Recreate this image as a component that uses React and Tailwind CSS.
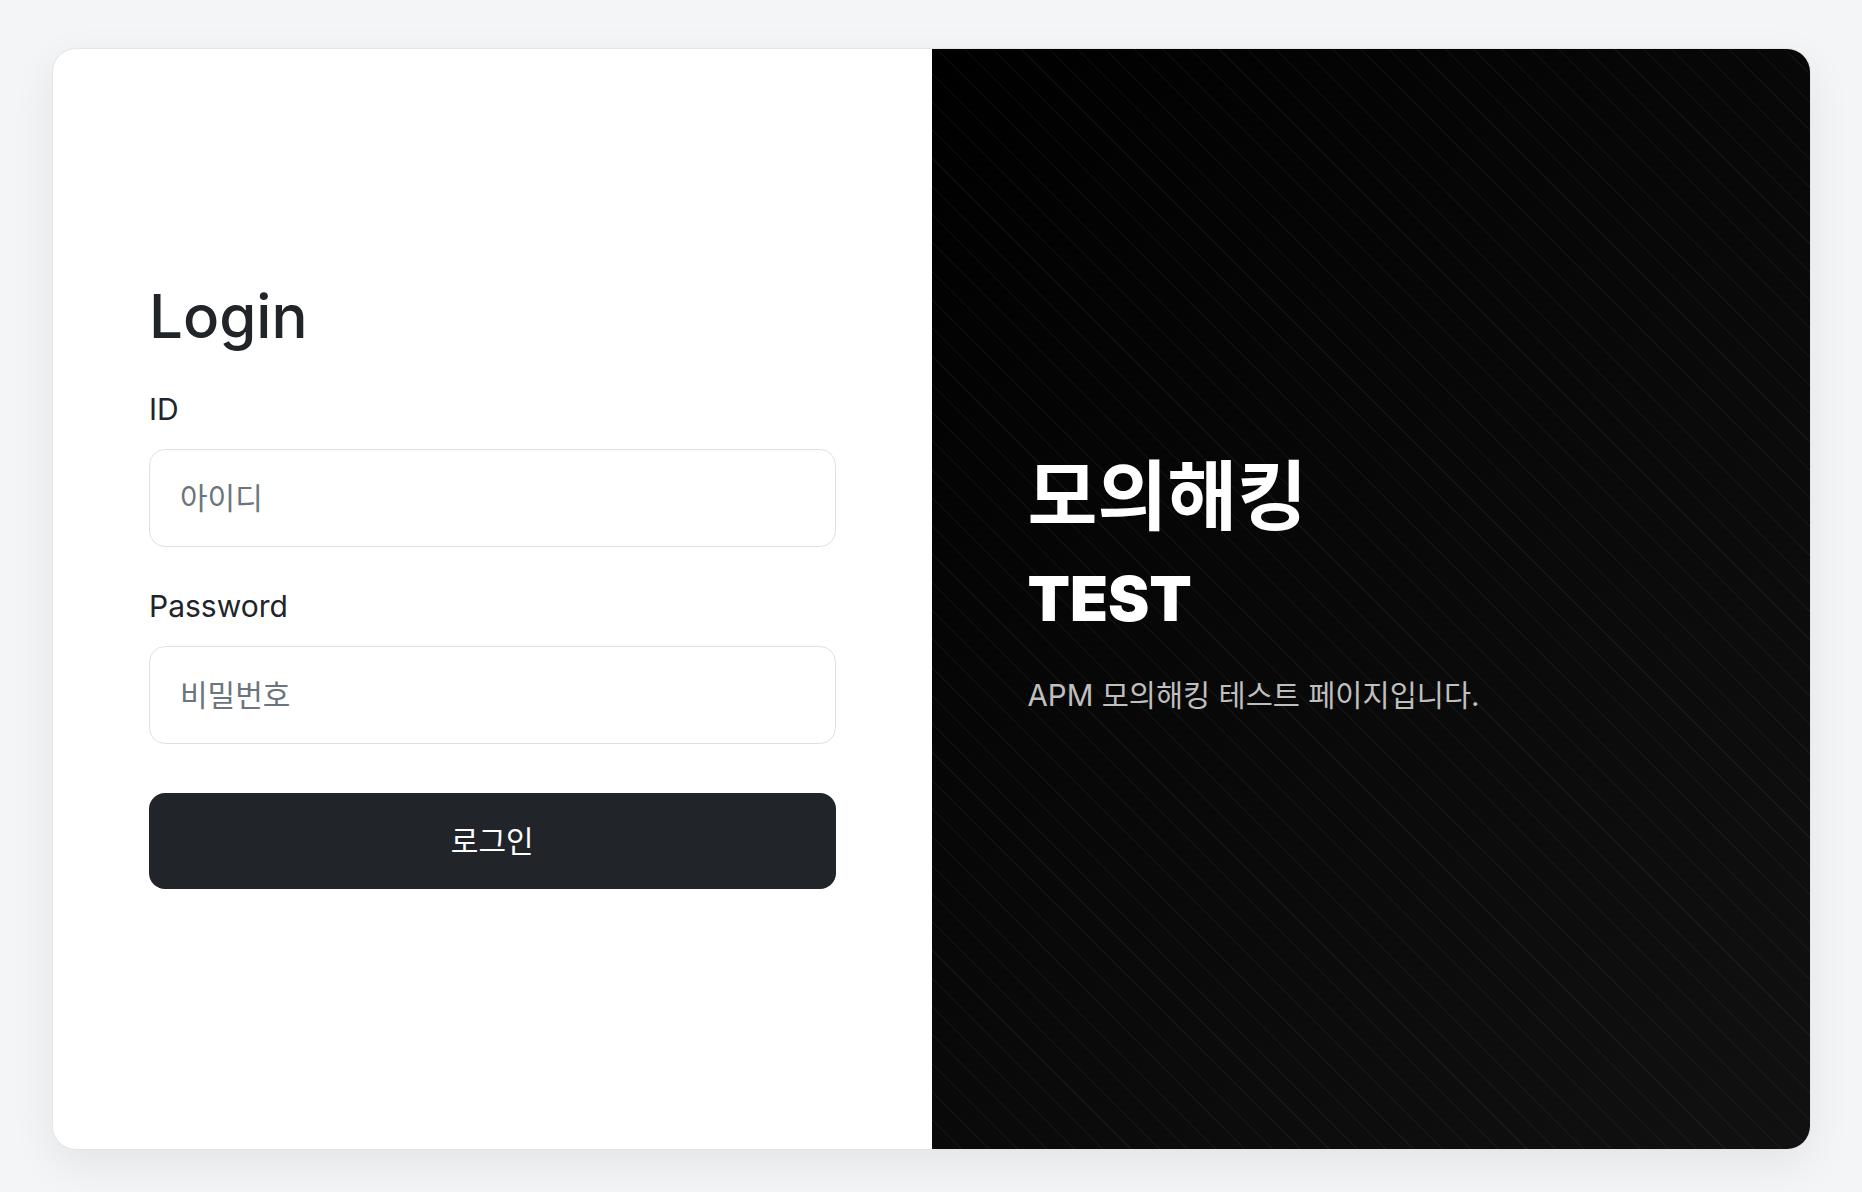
export default function App() {
  return (
    <div className="min-h-[1192px] bg-[#f4f5f7] pl-[52px] pr-[51px] pt-[48px] font-['Inter','Noto_Sans_CJK_KR',sans-serif]">
      <div className="flex h-[1102px] overflow-hidden rounded-[24px] border border-[#e3e5e9] bg-white shadow-[0_14px_44px_rgba(0,0,0,0.07)]">
        <div className="flex-1 px-[96px] pt-[230px]">
          <h1 className="text-[60px] font-medium leading-[74px] text-[#212529]">Login</h1>
          <label className="mt-[38px] block text-[30px] leading-[36px] text-[#212529]">ID</label>
          <input
            type="text"
            placeholder="아이디"
            className="mt-[22px] block h-[98px] w-full rounded-[16px] border border-[#dee2e6] bg-white px-[30px] text-[30px] text-[#212529] outline-none placeholder:text-[#6c757d]"
          />
          <label className="mt-[41px] block text-[30px] leading-[36px] text-[#212529]">Password</label>
          <input
            type="password"
            placeholder="비밀번호"
            className="mt-[22px] block h-[98px] w-full rounded-[16px] border border-[#dee2e6] bg-white px-[30px] text-[30px] text-[#212529] outline-none placeholder:text-[#6c757d]"
          />
          <button className="mt-[49px] flex h-[96px] w-full items-center justify-center rounded-[16px] bg-[#212529] text-[30px] text-white">
            로그인
          </button>
        </div>
        <div className="flex-1 bg-[repeating-linear-gradient(45deg,rgba(255,255,255,0.035)_0px,rgba(255,255,255,0.035)_1.5px,transparent_1.5px,transparent_20px),linear-gradient(135deg,#000000_0%,#111111_100%)] px-[96px] pt-[404px]">
          <h2 className="text-[76px] font-bold leading-[86px] text-white">모의해킹</h2>
          <h3 className="mt-[23px] text-[62px] font-black leading-[74px] text-white">TEST</h3>
          <p className="mt-[41px] text-[29.5px] leading-[36px] text-[#bfbfbf]">APM 모의해킹 테스트 페이지입니다.</p>
        </div>
      </div>
    </div>
  );
}
